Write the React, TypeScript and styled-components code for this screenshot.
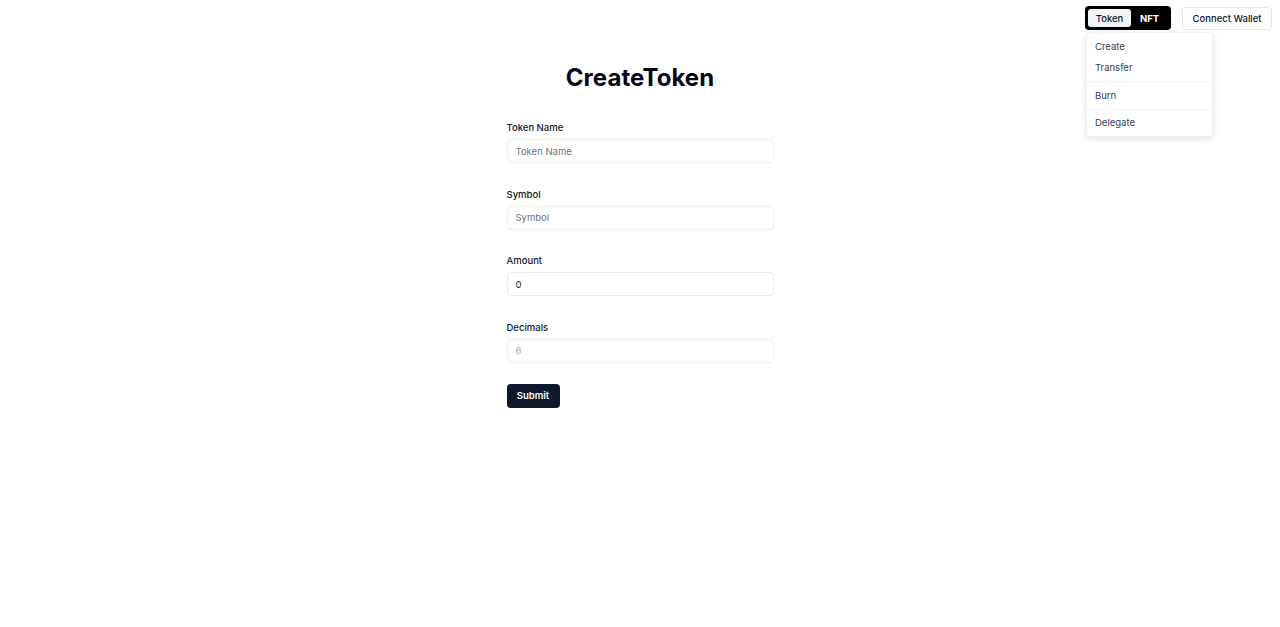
import React from "react";
import styled, { createGlobalStyle } from "styled-components";

const Global = createGlobalStyle`
  html, body { margin: 0; padding: 0; background: #ffffff; }
  body { font-family: Inter, "Noto Sans", sans-serif; color: #0f172a; }
  * { box-sizing: border-box; }
`;

const Page = styled.div`
  position: relative;
  width: 1280px;
  height: 627px;
`;

const TopBar = styled.header`
  display: flex;
  justify-content: flex-end;
  align-items: flex-start;
  gap: 11px;
  padding: 6px 8px 0 0;
`;

const NavWrap = styled.div`
  position: relative;
`;

const Toggle = styled.div`
  display: flex;
  align-items: center;
  height: 24px;
  padding: 3px;
  background: #000;
  border-radius: 4px;
`;

const Tab = styled.button<{ $active?: boolean }>`
  border: none;
  height: 18px;
  padding: 0;
  width: ${(p) => (p.$active ? "43px" : "37px")};
  border-radius: 3px;
  font-family: Inter, sans-serif;
  font-size: 9.5px;
  font-weight: ${(p) => (p.$active ? 500 : 700)};
  background: ${(p) => (p.$active ? "#f1f5f9" : "transparent")};
  color: ${(p) => (p.$active ? "#0f172a" : "#ffffff")};
  display: flex;
  align-items: center;
  justify-content: center;
`;

const Menu = styled.div`
  position: absolute;
  top: 26px;
  left: 1px;
  width: 127px;
  background: #fff;
  border: 1px solid #eef1f5;
  border-radius: 4px;
  box-shadow: 0 2px 6px rgba(15, 23, 42, 0.12);
  padding: 3px 0;
  display: flex;
  flex-direction: column;
`;

const MenuItem = styled.div`
  font-size: 9.5px;
  color: #334155;
  padding: 0 8px;
  height: 21px;
  display: flex;
  align-items: center;
`;

const Separator = styled.div`
  height: 1px;
  background: #f1f5f9;
  margin: 3px 0 2.5px;
`;

const OutlineButton = styled.button`
  height: 23px;
  width: 90px;
  margin-top: 1px;
  border: 1px solid #e2e8f0;
  border-radius: 4px;
  background: #fff;
  font-family: Inter, sans-serif;
  font-size: 9.5px;
  font-weight: 500;
  color: #0f172a;
`;

const Main = styled.main`
  width: 267px;
  margin: 0 auto;
  padding-top: 33px;
  display: flex;
  flex-direction: column;
`;

const Title = styled.h1`
  margin: 0;
  text-align: center;
  font-size: 24px;
  font-weight: 700;
  line-height: 30px;
  letter-spacing: 0.05px;
  color: #020617;
`;

const Form = styled.form`
  margin-top: 29px;
  display: flex;
  flex-direction: column;
  gap: 25.5px;
`;

const Field = styled.div`
  display: flex;
  flex-direction: column;
  gap: 5px;
`;

const Label = styled.label`
  font-size: 9.5px;
  font-weight: 500;
  line-height: 12px;
  color: #0f172a;
`;

const Input = styled.input<{ $muted?: boolean }>`
  height: 24px;
  width: 267px;
  border: 1px solid #e8ecf1;
  border-radius: 4px;
  padding: 0 8px;
  font-family: Inter, sans-serif;
  font-size: 9.5px;
  color: ${(p) => (p.$muted ? "#a1a8b3" : "#0f172a")};
  background: #fff;
  outline: none;
  &::placeholder { color: #6b7280; }
`;

const Submit = styled.button`
  align-self: flex-start;
  margin-top: -4.5px;
  height: 24px;
  width: 53px;
  border: none;
  border-radius: 4px;
  background: #0f172a;
  color: #fff;
  font-family: Inter, sans-serif;
  font-size: 9.5px;
  font-weight: 600;
`;

export default function App() {
  return (
    <Page>
      <Global />
      <TopBar>
        <NavWrap>
          <Toggle>
            <Tab $active>Token</Tab>
            <Tab>NFT</Tab>
          </Toggle>
          <Menu>
            <MenuItem>Create</MenuItem>
            <MenuItem>Transfer</MenuItem>
            <Separator />
            <MenuItem>Burn</MenuItem>
            <Separator />
            <MenuItem>Delegate</MenuItem>
          </Menu>
        </NavWrap>
        <OutlineButton>Connect Wallet</OutlineButton>
      </TopBar>
      <Main>
        <Title>CreateToken</Title>
        <Form onSubmit={(e) => e.preventDefault()}>
          <Field>
            <Label>Token Name</Label>
            <Input placeholder="Token Name" />
          </Field>
          <Field>
            <Label>Symbol</Label>
            <Input placeholder="Symbol" />
          </Field>
          <Field>
            <Label>Amount</Label>
            <Input defaultValue="0" />
          </Field>
          <Field>
            <Label>Decimals</Label>
            <Input defaultValue="6" $muted disabled />
          </Field>
          <Submit type="submit">Submit</Submit>
        </Form>
      </Main>
    </Page>
  );
}
